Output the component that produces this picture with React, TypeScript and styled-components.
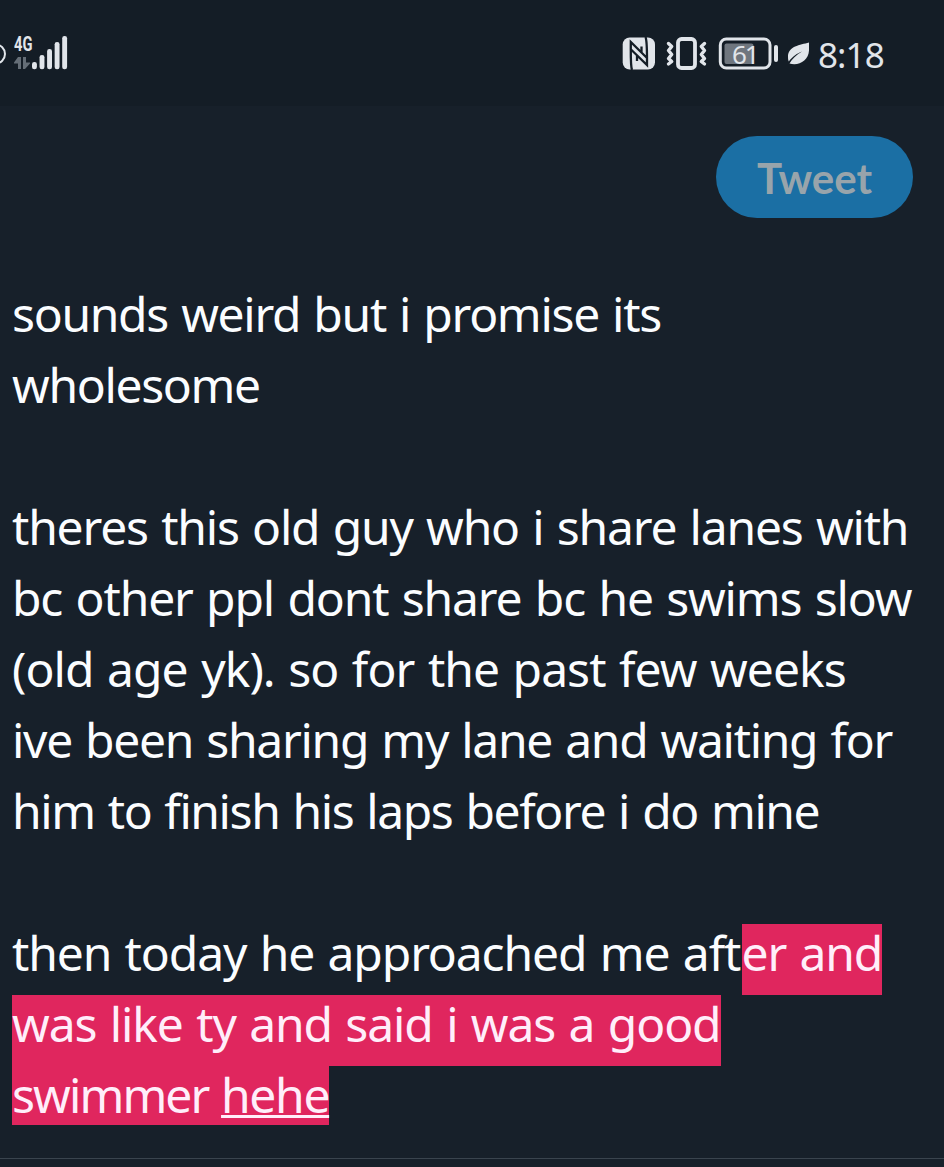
import React from "react";
import styled, { createGlobalStyle } from "styled-components";

const ink = "#e1e5ea";

const GlobalStyle = createGlobalStyle`
  html, body { margin: 0; background: #17202a; }
  * { box-sizing: border-box; }
`;

const Screen = styled.div`
  display: flex;
  flex-direction: column;
  width: 944px;
  height: 1167px;
  overflow: hidden;
  background: #17202a;
  color: #fbfdff;
  font-family: "Noto Sans", sans-serif;
`;

const StatusBar = styled.header`
  display: flex;
  justify-content: space-between;
  height: 106px;
  padding: 35px 60px 0 0;
  background: #141d26;
  color: ${ink};
`;

const StatusGroup = styled.div`
  display: flex;
  align-items: flex-start;
  height: 37px;
`;

const Network = styled.div`
  display: flex;
  flex-direction: column;
  width: 18px;
  margin-left: 7px;
`;

const NetworkLabel = styled.span`
  height: 21px;
  font: 700 21px/19px Roboto, sans-serif;
  transform: scaleX(0.7);
  transform-origin: left;
`;

const Icon = styled.svg<{ $gap?: number }>`
  display: block;
  flex: none;
  margin-left: ${(p) => p.$gap ?? 0}px;
`;

const Battery = styled.div`
  position: relative;
  display: flex;
  margin-left: 10px;
`;

const BatteryLevel = styled.span`
  position: absolute;
  left: 14px;
  top: 2px;
  font-size: 26px;
  line-height: 35px;
  letter-spacing: -2px;
`;

const Clock = styled.time`
  width: 66px;
  margin-left: 7px;
  font-size: 35px;
  line-height: 39px;
  letter-spacing: -0.9px;
  white-space: nowrap;
`;

const Actions = styled.div`
  display: flex;
  justify-content: flex-end;
  padding: 30px 31px 0 0;
`;

const TweetButton = styled.button`
  width: 197px;
  height: 82px;
  padding: 3px 0 0;
  border: 0;
  border-radius: 41px;
  background: #1b6fa4;
  color: #98a4ab;
  font: 700 42px/1.2 Lato, sans-serif;
`;

const Composer = styled.main`
  display: flex;
  flex-direction: column;
  height: 941px;
  padding: 67px 0 0 12px;
  border-bottom: 1px solid #3a444e;
  font-size: 48px;
`;

const Line = styled.div<{ $tracking?: number }>`
  display: flex;
  flex: none;
  height: 71px;
  line-height: 57px;
  letter-spacing: ${(p) => p.$tracking ?? 0}px;
  word-spacing: 2px;
  white-space: pre;
`;

const Over = styled.mark<{ $width: number; $height?: number }>`
  display: block;
  width: ${(p) => p.$width}px;
  height: ${(p) => p.$height ?? 71}px;
  background: #e0265e;
  color: #ffeefa;
`;

const Plain = styled.span<{ $width: number }>`
  display: block;
  width: ${(p) => p.$width}px;
`;

const Pending = styled.u`
  letter-spacing: -1.35px;
  text-decoration-thickness: 3px;
  text-underline-offset: 2px;
  text-decoration-skip-ink: none;
`;

const bars = [62, 55, 49, 42, 36];

export default function App() {
  return (
    <>
      <GlobalStyle />
      <Screen>
        <StatusBar>
          <StatusGroup>
            <Icon width="7" height="37" viewBox="0 0 7 37">
              <circle cx="-4.5" cy="19" r="9.5" fill="none" stroke={ink} strokeWidth="2" />
            </Icon>
            <Network>
              <NetworkLabel>4G</NetworkLabel>
              <Icon width="18" height="14" viewBox="0 0 18 14" fill="#656e77">
                <path d="M4 1h3v12H4V7.500H0V6.500ZM9 1h3v5.500h4v1L11 13H9Z" />
              </Icon>
            </Network>
            <Icon width="36" height="37" viewBox="32 35 36 37" fill={ink}>
              {bars.map((y, i) => (
                <rect key={y} x={32 + i * 7.55} y={y} width="4.9" height={69.3 - y} rx="2.3" />
              ))}
            </Icon>
          </StatusGroup>
          <StatusGroup>
            <Icon width="33" height="37" viewBox="622 35 33 37">
              <rect x="622.7" y="37.5" width="32.3" height="32" rx="7" fill={ink} />
              <path
                d="M632 70C630.500 66 630.800 60 630.800 42L646.500 57.500M641.500 53V46.500M645.500 37C647.200 41 647 47 647 65L631 49.500M637 56V61"
                fill="none"
                stroke="#141d26"
                strokeWidth="2.3"
              />
            </Icon>
            <Icon $gap={11} width="42" height="37" viewBox="666 35 42 37" fill="none" stroke={ink}>
              <rect x="678" y="39" width="17" height="29" rx="3.5" strokeWidth="3.8" />
              <path
                d="M668.5 43.5l3.2 3-3.2 4 3.2 4-3.2 4 3.2 3-3.2 2.5M704.5 43.5l-3.2 3 3.2 4-3.2 4 3.2 4-3.2 3 3.2 2.5"
                strokeWidth="3.4"
                strokeLinecap="round"
                strokeLinejoin="round"
              />
            </Icon>
            <Battery>
              <Icon width="61" height="37" viewBox="718 35 61 37">
                <rect x="720.3" y="39" width="49.7" height="29" rx="6" fill="none" stroke={ink} strokeWidth="3" />
                <rect x="724.5" y="43.5" width="29" height="20.5" rx="2" fill="#6f767e" />
                <rect x="774" y="45" width="4" height="17" rx="2" fill={ink} />
              </Icon>
              <BatteryLevel>61</BatteryLevel>
            </Battery>
            <Icon $gap={8} width="24" height="37" viewBox="787 35 24 37">
              <path
                d="M809 42.5C800 45 788 46 788 57c0 2 .2 3 .8 4.5C793 56 797 53.5 802 51.5 796 55 792 59 789.5 63.5c9 3 19-3 19.5-13Z"
                fill={ink}
              />
            </Icon>
            <Clock>8:18</Clock>
          </StatusGroup>
        </StatusBar>
        <Actions>
          <TweetButton>Tweet</TweetButton>
        </Actions>
        <Composer>
          <Line $tracking={-1.31}>sounds weird but i promise its</Line>
          <Line $tracking={-1.35}>wholesome</Line>
          <Line />
          <Line $tracking={-1.19}>theres this old guy who i share lanes with</Line>
          <Line $tracking={-1.15}>bc other ppl dont share bc he swims slow</Line>
          <Line $tracking={-0.96}>(old age yk). so for the past few weeks</Line>
          <Line $tracking={-1.31}>ive been sharing my lane and waiting for</Line>
          <Line $tracking={-1.42}>him to finish his laps before i do mine</Line>
          <Line />
          <Line $tracking={-1.12}>
            <Plain $width={729.5}>then today he approached me aft</Plain>
            <Over $width={140}>er and</Over>
          </Line>
          <Line $tracking={-1.1}>
            <Over $width={708.5}>was like ty and said i was a good</Over>
          </Line>
          <Line $tracking={-1.9}>
            <Over $width={317} $height={59}>
              swimmer <Pending>hehe</Pending>
            </Over>
          </Line>
        </Composer>
      </Screen>
    </>
  );
}
